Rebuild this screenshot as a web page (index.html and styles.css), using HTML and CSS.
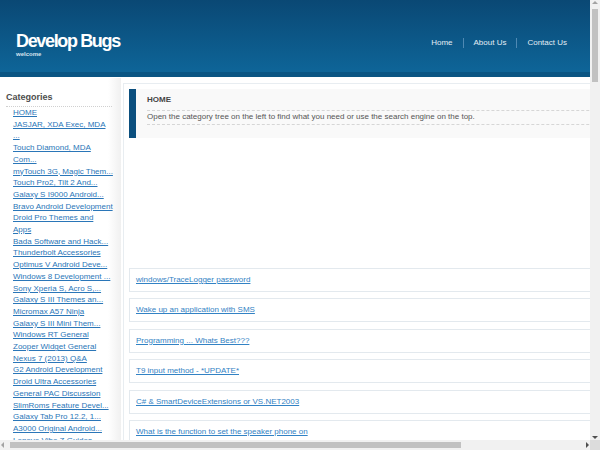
FILE: index.html
```html
<!DOCTYPE html>
<html lang="en">
<head>
<meta charset="utf-8">
<title>Develop Bugs</title>
<link rel="stylesheet" href="styles.css">
</head>
<body>
<header class="site-header">
  <div class="brand">
    <h1 class="brand-title">Develop Bugs</h1>
    <div class="brand-tag">welcome</div>
  </div>
  <nav class="top-nav">
    <a href="#">Home</a>
    <span class="sep"></span>
    <a href="#">About Us</a>
    <span class="sep"></span>
    <a href="#">Contact Us</a>
  </nav>
</header>
<div class="main">
  <aside class="sidebar">
    <h2 class="side-title">Categories</h2>
    <ul class="cat-list">
      <li><a href="#">HOME</a></li>
      <li><a href="#">JASJAR, XDA Exec, MDA ...</a></li>
      <li><a href="#">Touch Diamond, MDA Com...</a></li>
      <li><a href="#">myTouch 3G, Magic Them...</a></li>
      <li><a href="#">Touch Pro2, Tilt 2 And...</a></li>
      <li><a href="#">Galaxy S I9000 Android...</a></li>
      <li><a href="#">Bravo Android Development</a></li>
      <li><a href="#">Droid Pro Themes and Apps</a></li>
      <li><a href="#">Bada Software and Hack...</a></li>
      <li><a href="#">Thunderbolt Accessories</a></li>
      <li><a href="#">Optimus V Android Deve...</a></li>
      <li><a href="#">Windows 8 Development ...</a></li>
      <li><a href="#">Sony Xperia S, Acro S,...</a></li>
      <li><a href="#">Galaxy S III Themes an...</a></li>
      <li><a href="#">Micromax A57 Ninja</a></li>
      <li><a href="#">Galaxy S III Mini Them...</a></li>
      <li><a href="#">Windows RT General</a></li>
      <li><a href="#">Zooper Widget General</a></li>
      <li><a href="#">Nexus 7 (2013) Q&amp;A</a></li>
      <li><a href="#">G2 Android Development</a></li>
      <li><a href="#">Droid Ultra Accessories</a></li>
      <li><a href="#">General PAC Discussion</a></li>
      <li><a href="#">SlimRoms Feature Devel...</a></li>
      <li><a href="#">Galaxy Tab Pro 12.2, 1...</a></li>
      <li><a href="#">A3000 Original Android...</a></li>
      <li><a href="#">Lenovo Vibe Z Guides, ...</a></li>
      <li><a href="#">Moto X Accessories</a></li>
      <li><a href="#">One Mini General</a></li>
      <li><a href="#">Xperia Z2 Themes and A...</a></li>
      <li><a href="#">Galaxy S5 Q&amp;A, Help &amp; ...</a></li>
    </ul>
  </aside>
  <section class="content">
    <div class="intro">
      <h3 class="intro-title">HOME</h3>
      <p class="intro-text">Open the category tree on the left to find what you need or use the search engine on the top.</p>
    </div>
    <ul class="posts">
      <li><a href="#">windows/TraceLogger password</a></li>
      <li><a href="#">Wake up an application with SMS</a></li>
      <li><a href="#">Programming ... Whats Best???</a></li>
      <li><a href="#">T9 input method - *UPDATE*</a></li>
      <li><a href="#">C# &amp; SmartDeviceExtensions or VS.NET2003</a></li>
      <li><a href="#">What is the function to set the speaker phone on</a></li>
      <li><a href="#">Problem with Bluetooth headset</a></li>
      <li><a href="#">How to read SIM contacts from code</a></li>
      <li><a href="#">Today plugin development question</a></li>
      <li><a href="#">Sending AT commands to the radio</a></li>
      <li><a href="#">Custom ringtones for each contact</a></li>
      <li><a href="#">Soft reset from an application</a></li>
    </ul>
  </section>
</div>

<div class="vscroll" aria-hidden="true">
  <span class="arrow arrow-up"></span>
  <span class="vthumb"></span>
  <span class="arrow arrow-down"></span>
</div>
<div class="hscroll" aria-hidden="true">
  <span class="arrow arrow-left"></span>
  <span class="hthumb"></span>
  <span class="arrow arrow-right"></span>
</div>
<div class="scroll-corner" aria-hidden="true"></div>
</body>
</html>
```
FILE: styles.css
```css
html, body {
  margin: 0;
  padding: 0;
}
body {
  font-family: "Liberation Sans", Arial, sans-serif;
  font-size: 8px;
  color: #555;
  background: #fff;
}
a { color: #2a76b8; }

.site-header {
  display: flex;
  justify-content: space-between;
  align-items: flex-start;
  height: 77px;
  margin-right: 10px;
  padding: 32px 23px 0 16px;
  box-sizing: border-box;
  background: linear-gradient(#0a4874, #0e6598);
  border-bottom: 5px solid #0a5583;
}
.brand-title {
  margin: 0;
  font-size: 18px;
  line-height: 18px;
  font-weight: bold;
  letter-spacing: -1.35px;
  color: #fff;
}
.brand-tag {
  font-size: 6px;
  line-height: 8px;
  font-weight: bold;
  color: #d7e3ee;
}
.top-nav {
  display: flex;
  align-items: center;
  margin-top: 6px;
  gap: 10px;
}
.top-nav a {
  color: #e3edf5;
  text-decoration: none;
  font-size: 8px;
  line-height: 10px;
}
.top-nav .sep {
  width: 1px;
  height: 10px;
  background: #4f89b3;
}

.main {
  display: flex;
  width: 746px;
  min-height: 2570px;
  margin-top: 1px;
}
.sidebar {
  flex: 0 0 auto;
  width: 121px;
  box-sizing: border-box;
  padding: 13px 9px 0 6px;
  background: linear-gradient(to right, #fff 0, #fff 108px, #f0f0f0 121px);
}
.side-title {
  margin: 0;
  padding-bottom: 3px;
  font-size: 9px;
  line-height: 12px;
  color: #4d4d4d;
  border-bottom: 1px dotted #d0d0d0;
}
.cat-list {
  list-style: none;
  margin: 0;
  padding: 0 0 0 7px;
  width: 100.2px;
}
.cat-list li {
  line-height: 11.7px;
}
.cat-list a {
  color: #2a76b8;
}

.content {
  flex: 1 1 auto;
  margin: 5px 6px 0 2px;
  padding: 5px;
  border: 1px solid #e8edf1;
  align-self: flex-start;
  min-height: 2400px;
}
.intro {
  border-left: 7px solid #0b4f7e;
  background: #f9f9f9;
  padding: 6px 0 13px 11px;
  margin-bottom: 130px;
}
.intro-title {
  margin: 0 0 5px;
  font-size: 8px;
  line-height: 10px;
  color: #444;
}
.intro-text {
  margin: 0;
  padding: 0 0 2px;
  line-height: 11px;
  color: #555;
  border-top: 1px dashed #d6d6d6;
  border-bottom: 1px dashed #d6d6d6;
}
.posts {
  list-style: none;
  margin: 0;
  padding: 0;
}
.posts li {
  height: 24px;
  box-sizing: border-box;
  border: 1px solid #e3e9ee;
  padding-left: 6px;
  line-height: 22px;
  margin-bottom: 6.4px;
}
.posts a {
  color: #3282c4;
}

/* browser scrollbars drawn over the page */
.vscroll {
  position: fixed;
  top: 0;
  right: 0;
  width: 10px;
  height: 440px;
  background: #f1f1f1;
}
.hscroll {
  position: fixed;
  left: 0;
  bottom: 0;
  width: 590px;
  height: 10px;
  background: #f1f1f1;
}
.scroll-corner {
  position: fixed;
  right: 0;
  bottom: 0;
  width: 10px;
  height: 10px;
  background: #dcdcdc;
}
.vthumb {
  position: absolute;
  left: 2px;
  top: 9px;
  width: 6px;
  height: 73px;
  background: #c1c1c1;
}
.hthumb {
  position: absolute;
  top: 2px;
  left: 10px;
  width: 451px;
  height: 6px;
  background: #c1c1c1;
}
.arrow {
  position: absolute;
  width: 0;
  height: 0;
  border: 3px solid transparent;
}
.arrow-up { left: 2px; top: 1px; border-bottom-color: #a3a3a3; border-top-width: 0; }
.arrow-down { left: 2px; bottom: 1px; border-top-color: #505050; border-bottom-width: 0; }
.arrow-left { left: 1px; top: 2px; border-right-color: #a3a3a3; border-left-width: 0; }
.arrow-right { right: 1px; top: 2px; border-left-color: #505050; border-right-width: 0; }
```
